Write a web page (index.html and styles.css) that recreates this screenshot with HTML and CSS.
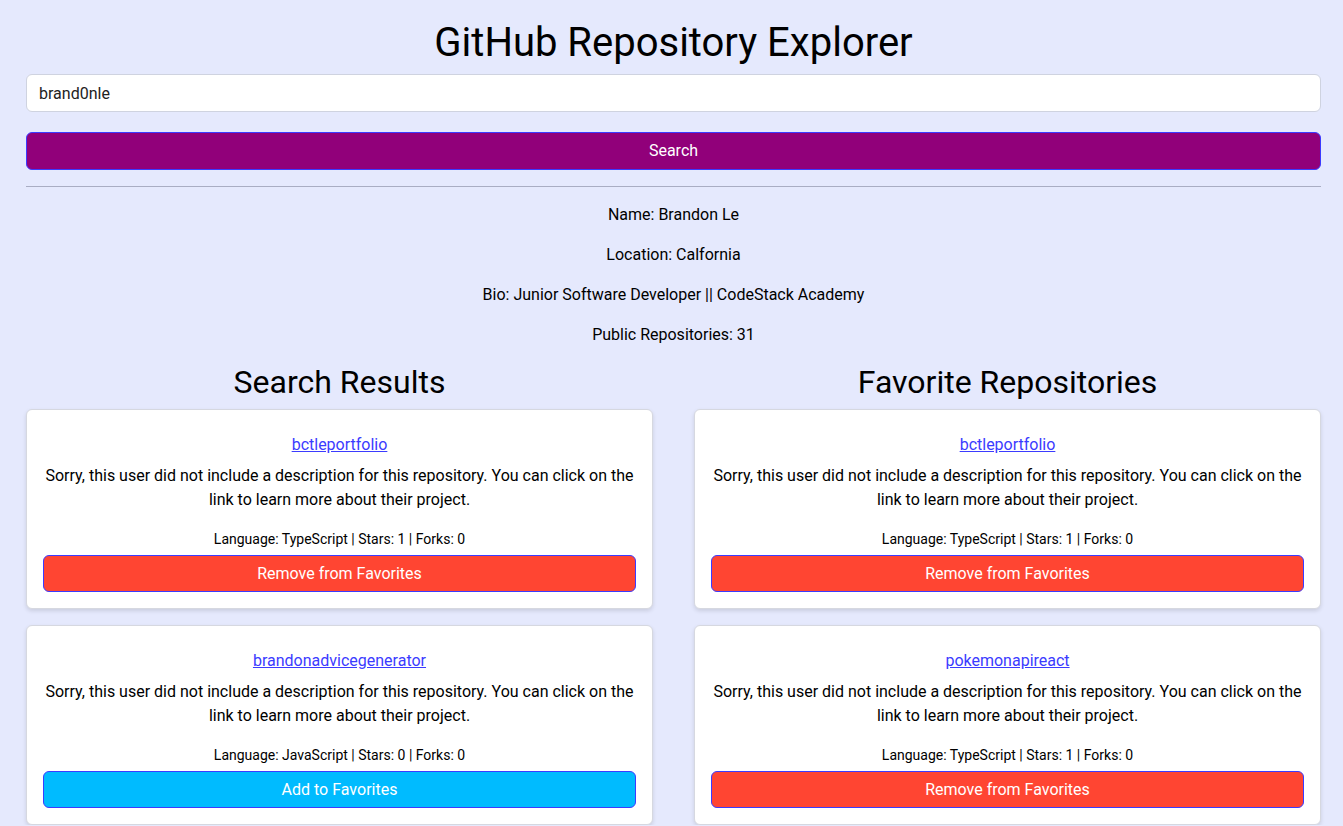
FILE: index.html
```html
<!DOCTYPE html>
<html lang="en">
<head>
<meta charset="utf-8">
<title>GitHub Repository Explorer</title>
<link rel="stylesheet" href="styles.css">
</head>
<body>
<div class="app">
  <h1 class="title">GitHub Repository Explorer</h1>
  <input class="search-input" type="text" value="brand0nle">
  <button class="search-btn">Search</button>
  <hr class="divider">
  <div class="profile">
    <p>Name: Brandon Le</p>
    <p>Location: Calfornia</p>
    <p>Bio: Junior Software Developer || CodeStack Academy</p>
    <p>Public Repositories: 31</p>
  </div>
  <div class="columns">
    <section class="column">
      <h2 class="col-title">Search Results</h2>
      <div class="card">
        <div class="repo-link"><a href="#">bctleportfolio</a></div>
        <p class="desc">Sorry, this user did not include a description for this repository. You can click on the link to learn more about their project.</p>
        <p class="meta">Language: TypeScript | Stars: 1 | Forks: 0</p>
        <button class="fav-btn remove">Remove from Favorites</button>
      </div>
      <div class="card">
        <div class="repo-link"><a href="#">brandonadvicegenerator</a></div>
        <p class="desc">Sorry, this user did not include a description for this repository. You can click on the link to learn more about their project.</p>
        <p class="meta">Language: JavaScript | Stars: 0 | Forks: 0</p>
        <button class="fav-btn add">Add to Favorites</button>
      </div>
    </section>
    <section class="column">
      <h2 class="col-title">Favorite Repositories</h2>
      <div class="card">
        <div class="repo-link"><a href="#">bctleportfolio</a></div>
        <p class="desc">Sorry, this user did not include a description for this repository. You can click on the link to learn more about their project.</p>
        <p class="meta">Language: TypeScript | Stars: 1 | Forks: 0</p>
        <button class="fav-btn remove">Remove from Favorites</button>
      </div>
      <div class="card">
        <div class="repo-link"><a href="#">pokemonapireact</a></div>
        <p class="desc">Sorry, this user did not include a description for this repository. You can click on the link to learn more about their project.</p>
        <p class="meta">Language: TypeScript | Stars: 1 | Forks: 0</p>
        <button class="fav-btn remove">Remove from Favorites</button>
      </div>
    </section>
  </div>
</div>
</body>
</html>
```

FILE: styles.css
```css
* { box-sizing: border-box; }

html, body {
  margin: 0;
  background: #e5e9fd;
}

body {
  font-family: Roboto, "Liberation Sans", Arial, sans-serif;
  color: #000;
  font-size: 16px;
}

.app {
  padding: 0 22px 0 26px;
  display: flex;
  flex-direction: column;
}

.title {
  margin: 20px 0 8px;
  font-size: 40px;
  line-height: 46px;
  font-weight: 400;
  text-align: center;
}

.search-input {
  display: block;
  width: 100%;
  height: 38px;
  padding: 0 12px;
  font-family: inherit;
  font-size: 16px;
  color: #222;
  background: #fff;
  border: 1px solid #cfd3e0;
  border-radius: 6px;
  outline: none;
}

.search-btn {
  display: block;
  width: 100%;
  height: 38px;
  margin-top: 20px;
  font-family: inherit;
  font-size: 16px;
  color: #fff;
  background: #91007a;
  border: 1px solid #3b3bff;
  border-radius: 6px;
  padding: 0 0 2px;
}

.divider {
  width: 100%;
  margin: 16px 0 0;
  border: 0;
  border-top: 1px solid #a9adc3;
  height: 0;
}

.profile {
  text-align: center;
}

.profile p {
  margin: 16px 0;
  line-height: 24px;
}

.columns {
  display: grid;
  grid-template-columns: 1fr 1fr;
  column-gap: 41px;
}

.column {
  display: flex;
  flex-direction: column;
  gap: 16px;
}

.col-title {
  margin: -1px 0 -9px;
  font-size: 32px;
  line-height: 40px;
  font-weight: 400;
  text-align: center;
}

.card {
  background: #fff;
  border: 1px solid #d6d8e0;
  border-radius: 6px;
  box-shadow: 0 2px 4px rgba(0, 0, 0, 0.12);
  padding: 23px 16px 16px;
  text-align: center;
}

.repo-link {
  line-height: 24px;
  margin-bottom: 7px;
}

.repo-link a {
  color: #3b3bff;
  text-decoration: underline;
}

.desc {
  margin: 0 0 17px;
  line-height: 24px;
}

.meta {
  margin: 0 0 6px;
  font-size: 14px;
  line-height: 20px;
}

.fav-btn {
  display: block;
  width: 100%;
  height: 37px;
  font-family: inherit;
  font-size: 16px;
  color: #fff;
  border: 1px solid #3b3bff;
  border-radius: 6px;
}

.fav-btn.remove { background: #ff4532; }
.fav-btn.add { background: #00bbff; }
```
